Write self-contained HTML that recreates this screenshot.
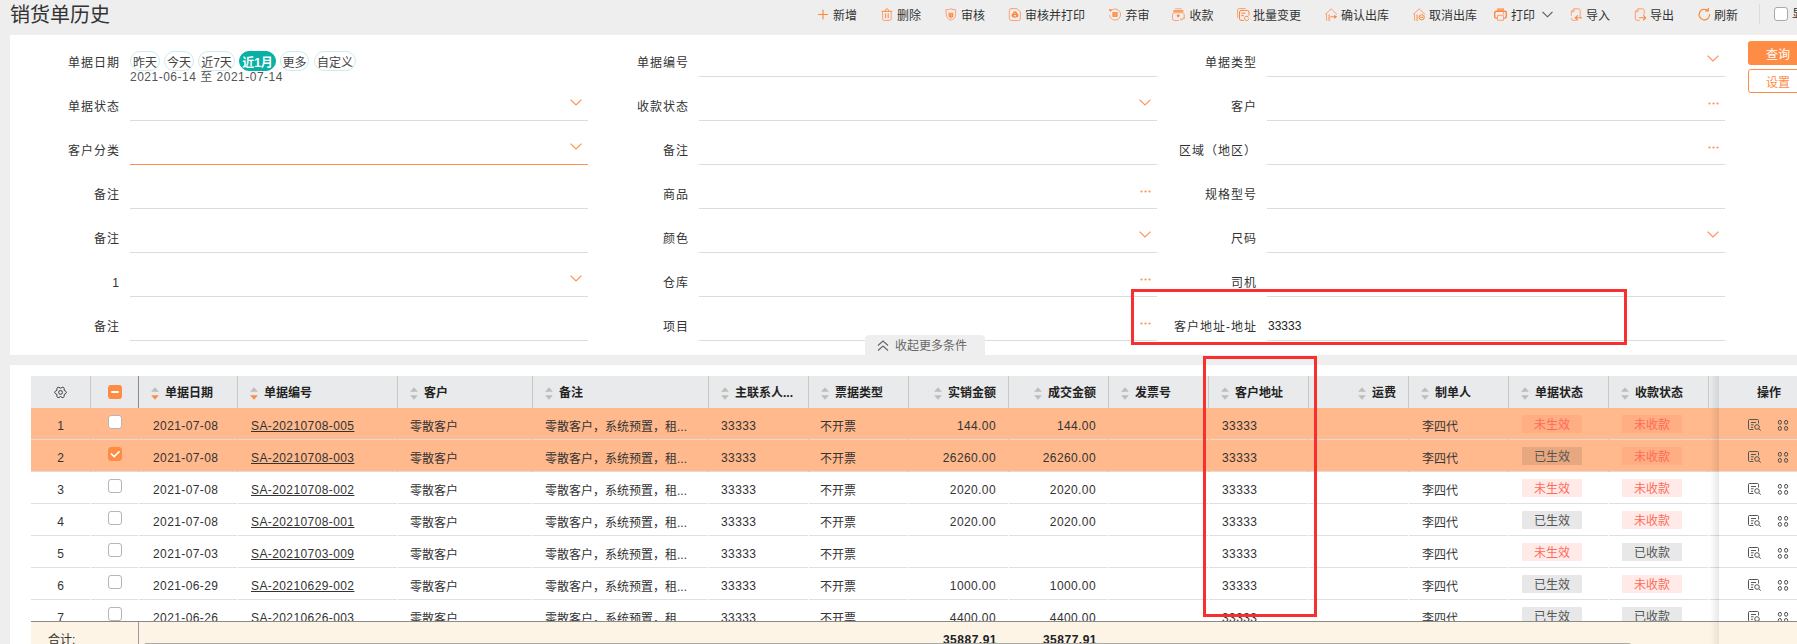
<!DOCTYPE html><html lang="zh-CN"><head><meta charset="utf-8"><title>销货单历史</title><style>
*{box-sizing:border-box;margin:0;padding:0}
html,body{width:1797px;height:644px;overflow:hidden;background:#eeeeee}
body{position:relative;font-family:"Liberation Sans","Noto Sans CJK SC",sans-serif;font-size:12px;color:#333}
.abs{position:absolute}
.title{left:10px;top:1px;height:28px;line-height:28px;font-size:20px;color:#333;white-space:nowrap}
.tb{top:0;height:33px;line-height:33px;white-space:nowrap;color:#333;font-size:12px}
.tb svg{position:absolute;left:0;top:8px;width:13px;height:13px;overflow:visible}
.tb span{position:absolute;left:15px;top:0}
.p1{left:10px;top:35px;width:1800px;height:320px;background:#fff}
.p2{left:10px;top:365px;width:1800px;height:300px;background:#fff}
.lb{height:20px;line-height:20px;width:120px;text-align:right;letter-spacing:1px;color:#333;white-space:nowrap}
.ul{height:1px;width:458px;background:#dcdcdc}
.ul.on{background:#ff9152}
.pill{top:51px;height:20px;line-height:22px;border:1px solid #c9eeec;border-radius:10px;text-align:center;color:#444;white-space:nowrap;background:#fff}
.pill.on{background:#08b0a6;border-color:#08b0a6;color:#fff;font-weight:bold}
.chev{width:12px;height:7px}
.dots{width:11px;height:3px}
.th{top:376px;height:32px;line-height:35px;font-weight:bold;color:#222;white-space:nowrap}
.sep{top:376px;width:1px;height:32px;background:#c8c8c8}
.row{left:31px;width:1800px;height:32px;border-bottom:1px solid #dfdfdf}
.row.sel{background:#ffb98c;border-bottom-color:#e2dcd8}
.c{height:32px;line-height:37px;white-space:nowrap;color:#333}
.c.r{text-align:right}
.c.n{letter-spacing:.4px}
.c.z{line-height:39px}
.lnk{text-decoration:underline}
.bd{width:60px;height:18px;line-height:20px;text-align:center;font-size:12px}
.bd.red{background:rgba(255,90,70,.13);color:#ff6a5a}
.bd.gry{background:rgba(0,0,0,.09);color:#555}
.gp{top:408px;width:1px;height:213px;background:linear-gradient(to bottom,transparent 31px,#ffb98c 31px,#ffb98c 32px,transparent 32px,transparent 63px,#ffb98c 63px,#ffb98c 64px,transparent 64px,transparent 95px,#fff 95px,#fff 96px,transparent 96px,transparent 127px,#fff 127px,#fff 128px,transparent 128px,transparent 159px,#fff 159px,#fff 160px,transparent 160px,transparent 191px,#fff 191px,#fff 192px,transparent 192px)}
.cb{width:14px;height:14px;border:1px solid #b5b5b5;border-radius:3px;background:#fff}
.cb.on{background:#ff8c45;border-color:#ff8c45}
</style></head><body>
<div class="abs title">销货单历史</div>
<div class="abs tb" style="left:818px;width:120px"><svg viewBox="0 0 13 13"><path d="M0.500 6.500h9M5 2v9" stroke="#ff8636" fill="none" stroke-width="1.1" stroke-linecap="round" stroke-linejoin="round" stroke-linecap="butt"/></svg><span style="left:15px">新增</span></div>
<div class="abs tb" style="left:881px;width:120px"><svg viewBox="0 0 13 13"><path d="M0.900 3.300h10M4.100 3.200c0-3.300 3.600-3.300 3.600 0" stroke="#ff8636" fill="none" stroke-width="1.0" stroke-linecap="round" stroke-linejoin="round" /><path d="M1.600 3.500v7a2 2 0 0 0 2 2h4.600a2 2 0 0 0 2-2v-7" stroke="#ff9f73" fill="none" stroke-width="1.0" stroke-linecap="round" stroke-linejoin="round" /><path d="M4.600 5.800v4M7.200 5.800v4" stroke="#ff8636" fill="none" stroke-width="1.0" stroke-linecap="round" stroke-linejoin="round" /></svg><span style="left:16px">删除</span></div>
<div class="abs tb" style="left:945px;width:120px"><svg viewBox="0 0 13 13"><path d="M1.200 1.800Q4 1.800 5.900 0.700Q7.800 1.800 10.600 1.800V6.500C10.600 9.600 8.500 11.300 5.900 12.300C3.300 11.300 1.200 9.600 1.200 6.500Z" stroke="#ff9f73" fill="none" stroke-width="1.0" stroke-linecap="round" stroke-linejoin="round" /><path d="M3.600 4.700h4.600v3.600c0 .6-.4 1-1 1h-2.600c-.6 0-1-.4-1-1z" fill="#ff8636"/><path d="M5.900 9.300v1" stroke="#ff8636" fill="none" stroke-width="1.0" stroke-linecap="round" stroke-linejoin="round" /><path d="M5.100 5.300v3M6.700 5.300v3" stroke="#ffd0b5" fill="none" stroke-width="0.5" stroke-linecap="round" stroke-linejoin="round" /></svg><span style="left:16px">审核</span></div>
<div class="abs tb" style="left:1009px;width:120px"><svg viewBox="0 0 13 13"><path d="M2.300 0.600h5.700l3.400 3.400v6.500a2 2 0 0 1-2 2h-7.100a2 2 0 0 1-2-2v-7.900a2 2 0 0 1 2-2z" stroke="#ff9f73" fill="none" stroke-width="1.0" stroke-linecap="round" stroke-linejoin="round" /><path d="M6 3.300a2 2 0 0 1 2 2c1 .5 1.400 1.300 1.400 2.200 0 1.300-1.500 2.300-3.400 2.300s-3.400-1-3.400-2.300c0-.9.400-1.700 1.400-2.200a2 2 0 0 1 2-2z" fill="#ff8636"/><ellipse cx="6" cy="7.700" rx="1.300" ry=".8" fill="#eeeeee"/><circle cx="6" cy="5.300" r=".6" fill="#eeeeee"/></svg><span style="left:16px">审核并打印</span></div>
<div class="abs tb" style="left:1108px;width:120px"><svg viewBox="0 0 13 13"><path d="M3.300 2.300A5.600 5.600 0 1 1 1.500 7.600" stroke="#ff9f73" fill="none" stroke-width="1.0" stroke-linecap="round" stroke-linejoin="round" /><path d="M0.900 0.700l3.400 1-2.300 2.300z" fill="#ff8636"/><path d="M4.400 4h5.200v4c0 .6-.4 1-1 1h-3.200c-.6 0-1-.4-1-1z" fill="#ff8636"/><path d="M6.100 4.600v3.800M7.900 4.600v3.800" stroke="#ffd0b5" fill="none" stroke-width="0.5" stroke-linecap="round" stroke-linejoin="round" /></svg><span style="left:17.5px">弃审</span></div>
<div class="abs tb" style="left:1172px;width:120px"><svg viewBox="0 0 13 13"><path d="M3.200 0.800h6.300" stroke="#ff9f73" fill="none" stroke-width="0.9" stroke-linecap="round" stroke-linejoin="round" /><path d="M1.800 2.900h9" stroke="#ff8636" fill="none" stroke-width="1.5" stroke-linecap="round" stroke-linejoin="round" /><path d="M2.500 4.700h7.700a2 2 0 0 1 2 2v3.600M6.500 12.500h-4a2 2 0 0 1-2-2v-3.800a2 2 0 0 1 2-2" stroke="#ff9f73" fill="none" stroke-width="1.0" stroke-linecap="round" stroke-linejoin="round" /><path d="M6.200 6l1.700 1.800-1.700 1.800-1.700-1.800z" fill="#ff8636"/><path d="M8.300 10.800l1.400 1.300 2.300-2.600" stroke="#ff8636" fill="none" stroke-width="1.0" stroke-linecap="round" stroke-linejoin="round" /></svg><span style="left:17.5px">收款</span></div>
<div class="abs tb" style="left:1237px;width:120px"><svg viewBox="0 0 13 13"><path d="M0.600 9.500v-7.300a1.700 1.700 0 0 1 1.700-1.700h5.700" stroke="#ff9f73" fill="none" stroke-width="1.0" stroke-linecap="round" stroke-linejoin="round" /><path d="M4.200 2.400h6.100a1.700 1.700 0 0 1 1.700 1.700v3M6.500 12.400h-2.300a1.700 1.700 0 0 1-1.700-1.700v-6.600a1.700 1.700 0 0 1 1.700-1.700" stroke="#ff8636" fill="none" stroke-width="1.0" stroke-linecap="round" stroke-linejoin="round" /><path d="M4.700 5.200h3.300M4.700 7.600h1.800" stroke="#ff8636" fill="none" stroke-width="1.0" stroke-linecap="round" stroke-linejoin="round" /><path d="M11.600 9.200a2.200 2.200 0 1 0 .2 1.800" stroke="#ff8636" fill="none" stroke-width="1.0" stroke-linecap="round" stroke-linejoin="round" /></svg><span style="left:16px">批量变更</span></div>
<div class="abs tb" style="left:1325px;width:120px"><svg viewBox="0 0 13 13"><path d="M0.400 6.300l5.700-5.500 5.700 5.500" stroke="#ff9f73" fill="none" stroke-width="1.0" stroke-linecap="round" stroke-linejoin="round" /><path d="M1.600 5.800v6.700" stroke="#ff9f73" fill="none" stroke-width="1.0" stroke-linecap="round" stroke-linejoin="round" /><path d="M4.100 7v5.500" stroke="#ff8636" fill="none" stroke-width="1.1" stroke-linecap="round" stroke-linejoin="round" stroke-dasharray="1.300 1" stroke-linecap="butt"/><path d="M5.800 8.800h4" stroke="#ff8636" fill="none" stroke-width="1.1" stroke-linecap="round" stroke-linejoin="round" stroke-dasharray="1.300 .8" stroke-linecap="butt"/><path d="M9.200 6.700l3 2.100-3 2.100z" fill="#ff8636"/></svg><span style="left:16px">确认出库</span></div>
<div class="abs tb" style="left:1413px;width:120px"><svg viewBox="0 0 13 13"><path d="M0.400 6.300l5.700-5.500 5.700 5.500" stroke="#ff9f73" fill="none" stroke-width="1.0" stroke-linecap="round" stroke-linejoin="round" /><path d="M1.600 5.800v6.700" stroke="#ff9f73" fill="none" stroke-width="1.0" stroke-linecap="round" stroke-linejoin="round" /><path d="M4.100 7v5.500" stroke="#ff8636" fill="none" stroke-width="1.1" stroke-linecap="round" stroke-linejoin="round" stroke-dasharray="1.300 1" stroke-linecap="butt"/><circle cx="8.700" cy="9.300" r="2.600" fill="none" stroke="#ff8636" stroke-width="1"/><path d="M7.500 9.300h2.400" stroke="#ff8636" fill="none" stroke-width="1.0" stroke-linecap="round" stroke-linejoin="round" /></svg><span style="left:16px">取消出库</span></div>
<div class="abs tb" style="left:1494px;width:120px"><svg viewBox="0 0 13 13"><path d="M3 0.300h7v2.500h-7z" fill="#ff9f73"/><path d="M2.300 3.200h8.400a1.600 1.600 0 0 1 1.600 1.600v3.700a1.600 1.600 0 0 1-1.600 1.600h-8.400a1.600 1.600 0 0 1-1.600-1.600v-3.700a1.600 1.600 0 0 1 1.600-1.600z" stroke="#ff8636" fill="none" stroke-width="1.4" stroke-linecap="round" stroke-linejoin="round" /><path d="M3.500 7.300h6v5h-6z" fill="#eeeeee" stroke="#ff9f73" stroke-width="1"/><circle cx="9.500" cy="5.200" r=".7" fill="#ff8636"/></svg><span style="left:17px">打印</span></div>
<div class="abs tb" style="left:1570px;width:120px"><svg viewBox="0 0 13 13"><path d="M1.300 7.500v-4l2.700-2.700h4.500a1.700 1.700 0 0 1 1.700 1.700v7.500M1.300 3.600h2.700v-2.700M6 12.300h-3a1.700 1.700 0 0 1-1.700-1.700" stroke="#ff9f73" fill="none" stroke-width="1.0" stroke-linecap="round" stroke-linejoin="round" /><path d="M11.600 9.800h-6M7.500 7.600l-2.300 2.200 2.300 2.200" stroke="#ff8636" fill="none" stroke-width="1.1" stroke-linecap="round" stroke-linejoin="round" /></svg><span style="left:16px">导入</span></div>
<div class="abs tb" style="left:1634px;width:120px"><svg viewBox="0 0 13 13"><path d="M1.300 9v-5.500l2.700-2.700h4.500a1.700 1.700 0 0 1 1.700 1.700v4M1.300 3.600h2.700v-2.700M1.300 9v1.600a1.700 1.700 0 0 0 1.700 1.700h2.500" stroke="#ff9f73" fill="none" stroke-width="1.0" stroke-linecap="round" stroke-linejoin="round" /><path d="M5.500 9.800h6M9.500 7.600l2.300 2.200-2.300 2.200" stroke="#ff8636" fill="none" stroke-width="1.1" stroke-linecap="round" stroke-linejoin="round" /></svg><span style="left:16px">导出</span></div>
<div class="abs tb" style="left:1698px;width:120px"><svg viewBox="0 0 13 13"><path d="M11.700 6.600a5.300 5.300 0 1 1-1.900-4.100" stroke="#ff8636" fill="none" stroke-width="1.2" stroke-linecap="round" stroke-linejoin="round" /><path d="M10.300 0.300v2.600h-2.600" stroke="#ff8636" fill="none" stroke-width="1.2" stroke-linecap="round" stroke-linejoin="round" /></svg><span style="left:16px">刷新</span></div>
<svg class="abs" style="left:1542px;top:11px" width="11" height="7" viewBox="0 0 11 7"><path d="M0.500 0.800l5 5 5-5" stroke="#555" fill="none" stroke-width="1.100"/></svg>
<div class="abs" style="left:1759px;top:4px;width:1px;height:20px;background:#dcdcdc"></div>
<div class="abs cb" style="left:1774px;top:7px;width:14px;height:14px;border-color:#a8a8a8"></div>
<div class="abs" style="left:1792px;top:0;height:29px;line-height:29px;white-space:nowrap">显示</div>
<div class="abs p1"></div>
<div class="abs lb" style="left:0px;top:53px">单据日期</div>
<div class="abs lb" style="left:569px;top:53px">单据编号</div>
<div class="abs ul" style="left:699px;top:76px"></div>
<div class="abs lb" style="left:1137px;top:53px">单据类型</div>
<div class="abs ul" style="left:1267px;top:76px"></div>
<svg class="abs chev" style="left:1707px;top:55px" viewBox="0 0 12 7"><path d="M0.500 0.600l5.500 5.400 5.500-5.400" stroke="#ff9152" fill="none" stroke-width="1.200"/></svg>
<div class="abs lb" style="left:0px;top:97px">单据状态</div>
<div class="abs ul" style="left:130px;top:120px"></div>
<svg class="abs chev" style="left:570px;top:99px" viewBox="0 0 12 7"><path d="M0.500 0.600l5.500 5.400 5.500-5.400" stroke="#ff9152" fill="none" stroke-width="1.200"/></svg>
<div class="abs lb" style="left:569px;top:97px">收款状态</div>
<div class="abs ul" style="left:699px;top:120px"></div>
<svg class="abs chev" style="left:1139px;top:99px" viewBox="0 0 12 7"><path d="M0.500 0.600l5.500 5.400 5.500-5.400" stroke="#ff9152" fill="none" stroke-width="1.200"/></svg>
<div class="abs lb" style="left:1137px;top:97px">客户</div>
<div class="abs ul" style="left:1267px;top:120px"></div>
<svg class="abs dots" style="left:1708px;top:102px" viewBox="0 0 11 3"><circle cx="1.500" cy="1.500" r="1.100" fill="#ff9152"/><circle cx="5.500" cy="1.500" r="1.100" fill="#ff9152"/><circle cx="9.500" cy="1.500" r="1.100" fill="#ff9152"/></svg>
<div class="abs lb" style="left:0px;top:141px">客户分类</div>
<div class="abs ul on" style="left:130px;top:164px"></div>
<svg class="abs chev" style="left:570px;top:143px" viewBox="0 0 12 7"><path d="M0.500 0.600l5.500 5.400 5.500-5.400" stroke="#ff9152" fill="none" stroke-width="1.200"/></svg>
<div class="abs lb" style="left:569px;top:141px">备注</div>
<div class="abs ul" style="left:699px;top:164px"></div>
<div class="abs lb" style="left:1137px;top:141px">区域（地区）</div>
<div class="abs ul" style="left:1267px;top:164px"></div>
<svg class="abs dots" style="left:1708px;top:146px" viewBox="0 0 11 3"><circle cx="1.500" cy="1.500" r="1.100" fill="#ff9152"/><circle cx="5.500" cy="1.500" r="1.100" fill="#ff9152"/><circle cx="9.500" cy="1.500" r="1.100" fill="#ff9152"/></svg>
<div class="abs lb" style="left:0px;top:185px">备注</div>
<div class="abs ul" style="left:130px;top:208px"></div>
<div class="abs lb" style="left:569px;top:185px">商品</div>
<div class="abs ul" style="left:699px;top:208px"></div>
<svg class="abs dots" style="left:1140px;top:190px" viewBox="0 0 11 3"><circle cx="1.500" cy="1.500" r="1.100" fill="#ff9152"/><circle cx="5.500" cy="1.500" r="1.100" fill="#ff9152"/><circle cx="9.500" cy="1.500" r="1.100" fill="#ff9152"/></svg>
<div class="abs lb" style="left:1137px;top:185px">规格型号</div>
<div class="abs ul" style="left:1267px;top:208px"></div>
<div class="abs lb" style="left:0px;top:229px">备注</div>
<div class="abs ul" style="left:130px;top:252px"></div>
<div class="abs lb" style="left:569px;top:229px">颜色</div>
<div class="abs ul" style="left:699px;top:252px"></div>
<svg class="abs chev" style="left:1139px;top:231px" viewBox="0 0 12 7"><path d="M0.500 0.600l5.500 5.400 5.500-5.400" stroke="#ff9152" fill="none" stroke-width="1.200"/></svg>
<div class="abs lb" style="left:1137px;top:229px">尺码</div>
<div class="abs ul" style="left:1267px;top:252px"></div>
<svg class="abs chev" style="left:1707px;top:231px" viewBox="0 0 12 7"><path d="M0.500 0.600l5.500 5.400 5.500-5.400" stroke="#ff9152" fill="none" stroke-width="1.200"/></svg>
<div class="abs lb" style="left:0px;top:273px">1</div>
<div class="abs ul" style="left:130px;top:296px"></div>
<svg class="abs chev" style="left:570px;top:275px" viewBox="0 0 12 7"><path d="M0.500 0.600l5.500 5.400 5.500-5.400" stroke="#ff9152" fill="none" stroke-width="1.200"/></svg>
<div class="abs lb" style="left:569px;top:273px">仓库</div>
<div class="abs ul" style="left:699px;top:296px"></div>
<svg class="abs dots" style="left:1140px;top:278px" viewBox="0 0 11 3"><circle cx="1.500" cy="1.500" r="1.100" fill="#ff9152"/><circle cx="5.500" cy="1.500" r="1.100" fill="#ff9152"/><circle cx="9.500" cy="1.500" r="1.100" fill="#ff9152"/></svg>
<div class="abs lb" style="left:1137px;top:273px">司机</div>
<div class="abs ul" style="left:1267px;top:296px"></div>
<div class="abs lb" style="left:0px;top:317px">备注</div>
<div class="abs ul" style="left:130px;top:340px"></div>
<div class="abs lb" style="left:569px;top:317px">项目</div>
<div class="abs ul" style="left:699px;top:340px"></div>
<svg class="abs dots" style="left:1140px;top:322px" viewBox="0 0 11 3"><circle cx="1.500" cy="1.500" r="1.100" fill="#ff9152"/><circle cx="5.500" cy="1.500" r="1.100" fill="#ff9152"/><circle cx="9.500" cy="1.500" r="1.100" fill="#ff9152"/></svg>
<div class="abs lb" style="left:1137px;top:317px">客户地址-地址</div>
<div class="abs ul" style="left:1267px;top:340px"></div>
<div class="abs pill" style="left:130px;width:30px">昨天</div>
<div class="abs pill" style="left:164px;width:30px">今天</div>
<div class="abs pill" style="left:198px;width:37px">近7天</div>
<div class="abs pill on" style="left:239px;width:37px">近1月</div>
<div class="abs pill" style="left:280px;width:29px">更多</div>
<div class="abs pill" style="left:314px;width:42px">自定义</div>
<div class="abs" style="left:130px;top:69px;height:16px;line-height:16px;color:#555;white-space:nowrap;letter-spacing:.5px">2021-06-14 至 2021-07-14</div>
<div class="abs" style="left:1268px;top:316px;height:20px;line-height:20px;color:#222">33333</div>
<div class="abs" style="left:1748px;top:41px;width:60px;height:24px;line-height:28px;background:#ff8c45;border-radius:3px;color:#fff;text-align:center">查询</div>
<div class="abs" style="left:1748px;top:69px;width:60px;height:24px;line-height:24px;padding-top:1px;background:#fff;border:1px solid #ff8c45;border-radius:3px;color:#ff8c45;text-align:center">设置</div>
<div class="abs" style="left:865px;top:335px;width:120px;height:20px;background:#eeeeee;border-radius:4px 4px 0 0"></div>
<svg class="abs" style="left:877px;top:340px" width="12" height="12" viewBox="0 0 12 12"><path d="M1 5.500l5-4.500 5 4.500M1 10.500l5-4.500 5 4.500" stroke="#666" fill="none" stroke-width="1.200"/></svg>
<div class="abs" style="left:895px;top:335px;height:20px;line-height:23px;color:#666;white-space:nowrap">收起更多条件</div>
<div class="abs p2"></div>
<div class="abs" style="left:31px;top:376px;width:1800px;height:32px;background:#e9eaec"></div>
<svg class="abs" style="left:54px;top:386px" width="13" height="13" viewBox="0 0 13 13"><path d="M10.19 4.30Q14.65 6.40 10.19 8.50Q10.60 13.41 6.55 10.60Q2.50 13.41 2.91 8.50Q-1.55 6.40 2.91 4.30Q2.50 -0.61 6.55 2.20Q10.60 -0.61 10.19 4.30z" fill="none" stroke="#3c3c3c" stroke-width="1" stroke-linejoin="round"/><circle cx="6.55" cy="6.40" r="1.900" fill="none" stroke="#3c3c3c" stroke-width="1"/></svg>
<div class="abs sep" style="left:90px;"></div>
<div class="abs" style="left:108px;top:385px;width:14px;height:14px;border-radius:3px;background:#ff8c45"></div><div class="abs" style="left:111px;top:391px;width:8px;height:2px;background:#fff;border-radius:1px"></div>
<div class="abs sep" style="left:138px;background:#8a8a8a"></div>
<svg class="abs" style="left:151px;top:387px" width="8" height="13" viewBox="0 0 8 13"><path d="M4 0.200l3.900 4.600h-7.800z" fill="#bdbdbd"/><path d="M4 12.800l3.900-4.600h-7.800z" fill="#ff8c45"/></svg>
<div class="abs th" style="left:165px">单据日期</div>
<div class="abs sep" style="left:237px;"></div>
<svg class="abs" style="left:250px;top:387px" width="8" height="13" viewBox="0 0 8 13"><path d="M4 0.200l3.900 4.600h-7.800z" fill="#bdbdbd"/><path d="M4 12.800l3.900-4.600h-7.800z" fill="#ff8c45"/></svg>
<div class="abs th" style="left:264px">单据编号</div>
<div class="abs sep" style="left:397px;"></div>
<svg class="abs" style="left:410px;top:387px" width="8" height="13" viewBox="0 0 8 13"><path d="M4 0.200l3.900 4.600h-7.800z" fill="#bdbdbd"/><path d="M4 12.800l3.900-4.600h-7.800z" fill="#bdbdbd"/></svg>
<div class="abs th" style="left:424px">客户</div>
<div class="abs sep" style="left:532px;"></div>
<svg class="abs" style="left:545px;top:387px" width="8" height="13" viewBox="0 0 8 13"><path d="M4 0.200l3.900 4.600h-7.800z" fill="#bdbdbd"/><path d="M4 12.800l3.900-4.600h-7.800z" fill="#bdbdbd"/></svg>
<div class="abs th" style="left:559px">备注</div>
<div class="abs sep" style="left:708px;"></div>
<svg class="abs" style="left:721px;top:387px" width="8" height="13" viewBox="0 0 8 13"><path d="M4 0.200l3.900 4.600h-7.800z" fill="#bdbdbd"/><path d="M4 12.800l3.900-4.600h-7.800z" fill="#bdbdbd"/></svg>
<div class="abs th" style="left:735px">主联系人...</div>
<div class="abs sep" style="left:808px;"></div>
<svg class="abs" style="left:821px;top:387px" width="8" height="13" viewBox="0 0 8 13"><path d="M4 0.200l3.900 4.600h-7.800z" fill="#bdbdbd"/><path d="M4 12.800l3.900-4.600h-7.800z" fill="#bdbdbd"/></svg>
<div class="abs th" style="left:835px">票据类型</div>
<div class="abs sep" style="left:908px;"></div>
<svg class="abs" style="left:934px;top:387px" width="8" height="13" viewBox="0 0 8 13"><path d="M4 0.200l3.900 4.600h-7.800z" fill="#bdbdbd"/><path d="M4 12.800l3.900-4.600h-7.800z" fill="#bdbdbd"/></svg>
<div class="abs th" style="left:948px">实销金额</div>
<div class="abs sep" style="left:1008px;"></div>
<svg class="abs" style="left:1034px;top:387px" width="8" height="13" viewBox="0 0 8 13"><path d="M4 0.200l3.900 4.600h-7.800z" fill="#bdbdbd"/><path d="M4 12.800l3.900-4.600h-7.800z" fill="#bdbdbd"/></svg>
<div class="abs th" style="left:1048px">成交金额</div>
<div class="abs sep" style="left:1108px;"></div>
<svg class="abs" style="left:1121px;top:387px" width="8" height="13" viewBox="0 0 8 13"><path d="M4 0.200l3.900 4.600h-7.800z" fill="#bdbdbd"/><path d="M4 12.800l3.900-4.600h-7.800z" fill="#bdbdbd"/></svg>
<div class="abs th" style="left:1135px">发票号</div>
<div class="abs sep" style="left:1208px;"></div>
<svg class="abs" style="left:1221px;top:387px" width="8" height="13" viewBox="0 0 8 13"><path d="M4 0.200l3.900 4.600h-7.800z" fill="#bdbdbd"/><path d="M4 12.800l3.900-4.600h-7.800z" fill="#bdbdbd"/></svg>
<div class="abs th" style="left:1235px">客户地址</div>
<div class="abs sep" style="left:1308px;"></div>
<svg class="abs" style="left:1358px;top:387px" width="8" height="13" viewBox="0 0 8 13"><path d="M4 0.200l3.900 4.600h-7.800z" fill="#bdbdbd"/><path d="M4 12.800l3.900-4.600h-7.800z" fill="#bdbdbd"/></svg>
<div class="abs th" style="left:1372px">运费</div>
<div class="abs sep" style="left:1408px;"></div>
<svg class="abs" style="left:1421px;top:387px" width="8" height="13" viewBox="0 0 8 13"><path d="M4 0.200l3.900 4.600h-7.800z" fill="#bdbdbd"/><path d="M4 12.800l3.900-4.600h-7.800z" fill="#bdbdbd"/></svg>
<div class="abs th" style="left:1435px">制单人</div>
<div class="abs sep" style="left:1508px;"></div>
<svg class="abs" style="left:1521px;top:387px" width="8" height="13" viewBox="0 0 8 13"><path d="M4 0.200l3.900 4.600h-7.800z" fill="#bdbdbd"/><path d="M4 12.800l3.900-4.600h-7.800z" fill="#bdbdbd"/></svg>
<div class="abs th" style="left:1535px">单据状态</div>
<div class="abs sep" style="left:1608px;"></div>
<svg class="abs" style="left:1621px;top:387px" width="8" height="13" viewBox="0 0 8 13"><path d="M4 0.200l3.900 4.600h-7.800z" fill="#bdbdbd"/><path d="M4 12.800l3.900-4.600h-7.800z" fill="#bdbdbd"/></svg>
<div class="abs th" style="left:1635px">收款状态</div>
<div class="abs sep" style="left:1708px;"></div>
<div class="abs sep" style="left:1708px"></div>
<div class="abs row sel" style="top:408px">
<div class="abs c" style="left:0;width:59px;text-align:center">1</div>
<div class="abs cb" style="left:77px;top:7px"></div>
<div class="abs c n" style="left:122px;width:90px">2021-07-08</div>
<div class="abs c n" style="left:220px;width:140px"><span class="lnk">SA-20210708-005</span></div>
<div class="abs c z" style="left:379px;width:120px">零散客户</div>
<div class="abs c z" style="left:514px;width:160px">零散客户，系统预置，租...</div>
<div class="abs c n" style="left:690px;width:80px">33333</div>
<div class="abs c z" style="left:789px;width:80px">不开票</div>
<div class="abs c r n" style="left:877px;width:88px">144.00</div>
<div class="abs c r n" style="left:977px;width:88px">144.00</div>
<div class="abs c n" style="left:1191px;width:80px">33333</div>
<div class="abs c z" style="left:1391px;width:80px">李四代</div>
<div class="abs bd red" style="left:1491px;top:7px">未生效</div>
<div class="abs bd red" style="left:1591px;top:7px">未收款</div>
</div>
<div class="abs row sel" style="top:440px">
<div class="abs c" style="left:0;width:59px;text-align:center">2</div>
<div class="abs cb on" style="left:77px;top:7px"></div><svg class="abs" style="left:77px;top:7px" width="14" height="14" viewBox="0 0 14 14"><path d="M2.800 6.500l3.300 3.100 5.400-5.300" stroke="#fff" fill="none" stroke-width="1.700"/></svg>
<div class="abs c n" style="left:122px;width:90px">2021-07-08</div>
<div class="abs c n" style="left:220px;width:140px"><span class="lnk">SA-20210708-003</span></div>
<div class="abs c z" style="left:379px;width:120px">零散客户</div>
<div class="abs c z" style="left:514px;width:160px">零散客户，系统预置，租...</div>
<div class="abs c n" style="left:690px;width:80px">33333</div>
<div class="abs c z" style="left:789px;width:80px">不开票</div>
<div class="abs c r n" style="left:877px;width:88px">26260.00</div>
<div class="abs c r n" style="left:977px;width:88px">26260.00</div>
<div class="abs c n" style="left:1191px;width:80px">33333</div>
<div class="abs c z" style="left:1391px;width:80px">李四代</div>
<div class="abs bd gry" style="left:1491px;top:7px">已生效</div>
<div class="abs bd red" style="left:1591px;top:7px">未收款</div>
</div>
<div class="abs row" style="top:472px">
<div class="abs c" style="left:0;width:59px;text-align:center">3</div>
<div class="abs cb" style="left:77px;top:7px"></div>
<div class="abs c n" style="left:122px;width:90px">2021-07-08</div>
<div class="abs c n" style="left:220px;width:140px"><span class="lnk">SA-20210708-002</span></div>
<div class="abs c z" style="left:379px;width:120px">零散客户</div>
<div class="abs c z" style="left:514px;width:160px">零散客户，系统预置，租...</div>
<div class="abs c n" style="left:690px;width:80px">33333</div>
<div class="abs c z" style="left:789px;width:80px">不开票</div>
<div class="abs c r n" style="left:877px;width:88px">2020.00</div>
<div class="abs c r n" style="left:977px;width:88px">2020.00</div>
<div class="abs c n" style="left:1191px;width:80px">33333</div>
<div class="abs c z" style="left:1391px;width:80px">李四代</div>
<div class="abs bd red" style="left:1491px;top:7px">未生效</div>
<div class="abs bd red" style="left:1591px;top:7px">未收款</div>
</div>
<div class="abs row" style="top:504px">
<div class="abs c" style="left:0;width:59px;text-align:center">4</div>
<div class="abs cb" style="left:77px;top:7px"></div>
<div class="abs c n" style="left:122px;width:90px">2021-07-08</div>
<div class="abs c n" style="left:220px;width:140px"><span class="lnk">SA-20210708-001</span></div>
<div class="abs c z" style="left:379px;width:120px">零散客户</div>
<div class="abs c z" style="left:514px;width:160px">零散客户，系统预置，租...</div>
<div class="abs c n" style="left:690px;width:80px">33333</div>
<div class="abs c z" style="left:789px;width:80px">不开票</div>
<div class="abs c r n" style="left:877px;width:88px">2020.00</div>
<div class="abs c r n" style="left:977px;width:88px">2020.00</div>
<div class="abs c n" style="left:1191px;width:80px">33333</div>
<div class="abs c z" style="left:1391px;width:80px">李四代</div>
<div class="abs bd gry" style="left:1491px;top:7px">已生效</div>
<div class="abs bd red" style="left:1591px;top:7px">未收款</div>
</div>
<div class="abs row" style="top:536px">
<div class="abs c" style="left:0;width:59px;text-align:center">5</div>
<div class="abs cb" style="left:77px;top:7px"></div>
<div class="abs c n" style="left:122px;width:90px">2021-07-03</div>
<div class="abs c n" style="left:220px;width:140px"><span class="lnk">SA-20210703-009</span></div>
<div class="abs c z" style="left:379px;width:120px">零散客户</div>
<div class="abs c z" style="left:514px;width:160px">零散客户，系统预置，租...</div>
<div class="abs c n" style="left:690px;width:80px">33333</div>
<div class="abs c z" style="left:789px;width:80px">不开票</div>
<div class="abs c r n" style="left:877px;width:88px"></div>
<div class="abs c r n" style="left:977px;width:88px"></div>
<div class="abs c n" style="left:1191px;width:80px">33333</div>
<div class="abs c z" style="left:1391px;width:80px">李四代</div>
<div class="abs bd red" style="left:1491px;top:7px">未生效</div>
<div class="abs bd gry" style="left:1591px;top:7px">已收款</div>
</div>
<div class="abs row" style="top:568px">
<div class="abs c" style="left:0;width:59px;text-align:center">6</div>
<div class="abs cb" style="left:77px;top:7px"></div>
<div class="abs c n" style="left:122px;width:90px">2021-06-29</div>
<div class="abs c n" style="left:220px;width:140px"><span class="lnk">SA-20210629-002</span></div>
<div class="abs c z" style="left:379px;width:120px">零散客户</div>
<div class="abs c z" style="left:514px;width:160px">零散客户，系统预置，租...</div>
<div class="abs c n" style="left:690px;width:80px">33333</div>
<div class="abs c z" style="left:789px;width:80px">不开票</div>
<div class="abs c r n" style="left:877px;width:88px">1000.00</div>
<div class="abs c r n" style="left:977px;width:88px">1000.00</div>
<div class="abs c n" style="left:1191px;width:80px">33333</div>
<div class="abs c z" style="left:1391px;width:80px">李四代</div>
<div class="abs bd gry" style="left:1491px;top:7px">已生效</div>
<div class="abs bd red" style="left:1591px;top:7px">未收款</div>
</div>
<div class="abs row" style="top:600px">
<div class="abs c" style="left:0;width:59px;text-align:center">7</div>
<div class="abs cb" style="left:77px;top:7px"></div>
<div class="abs c n" style="left:122px;width:90px">2021-06-26</div>
<div class="abs c n" style="left:220px;width:140px"><span class="lnk">SA-20210626-003</span></div>
<div class="abs c z" style="left:379px;width:120px">零散客户</div>
<div class="abs c z" style="left:514px;width:160px">零散客户，系统预置，租...</div>
<div class="abs c n" style="left:690px;width:80px">33333</div>
<div class="abs c z" style="left:789px;width:80px">不开票</div>
<div class="abs c r n" style="left:877px;width:88px">4400.00</div>
<div class="abs c r n" style="left:977px;width:88px">4400.00</div>
<div class="abs c n" style="left:1191px;width:80px">33333</div>
<div class="abs c z" style="left:1391px;width:80px">李四代</div>
<div class="abs bd gry" style="left:1491px;top:7px">已生效</div>
<div class="abs bd gry" style="left:1591px;top:7px">已收款</div>
</div>
<div class="abs gp" style="left:90px"></div>
<div class="abs gp" style="left:138px"></div>
<div class="abs gp" style="left:237px"></div>
<div class="abs gp" style="left:397px"></div>
<div class="abs gp" style="left:532px"></div>
<div class="abs gp" style="left:708px"></div>
<div class="abs gp" style="left:808px"></div>
<div class="abs gp" style="left:908px"></div>
<div class="abs gp" style="left:1008px"></div>
<div class="abs gp" style="left:1108px"></div>
<div class="abs gp" style="left:1208px"></div>
<div class="abs gp" style="left:1308px"></div>
<div class="abs gp" style="left:1408px"></div>
<div class="abs gp" style="left:1508px"></div>
<div class="abs gp" style="left:1608px"></div>
<div class="abs gp" style="left:1708px"></div>
<div class="abs" style="left:1710px;top:376px;width:9px;height:268px;background:linear-gradient(to right,rgba(0,0,0,0),rgba(0,0,0,.09))"></div>
<div class="abs" style="left:1719px;top:376px;width:100px;height:32px;background:#e9eaec"></div>
<div class="abs th" style="left:1757px">操作</div>
<div class="abs" style="left:1719px;top:408px;width:100px;height:32px;background:#ffb98c;border-bottom:1px solid #e4dcd8"></div>
<svg class="abs" style="left:1748px;top:419px" width="14" height="12" viewBox="0 0 14 12"><path d="M5.500 10.500h-4a1 1 0 0 1-1-1v-8a1 1 0 0 1 1-1h8a1 1 0 0 1 1 1v3M3 3.500h5M3 5.800h2.500M3 8.300h2" stroke="#555" fill="none" stroke-width="1"/><circle cx="9" cy="8" r="2.300" stroke="#555" fill="none" stroke-width="1"/><path d="M10.800 9.800l2 1.800" stroke="#555" stroke-width="1"/></svg>
<svg class="abs" style="left:1777px;top:419px" width="12" height="13" viewBox="0 0 12 13"><g stroke="#4a4a4a" fill="none" stroke-width="1"><ellipse cx="2.85" cy="3.3" rx="1.6" ry="1.9"/><ellipse cx="9.1" cy="3.3" rx="1.6" ry="1.9"/><ellipse cx="2.85" cy="9.4" rx="1.6" ry="1.9"/><ellipse cx="9.1" cy="9.4" rx="1.6" ry="1.9"/></g></svg>
<div class="abs" style="left:1719px;top:440px;width:100px;height:32px;background:#ffb98c;border-bottom:1px solid #e4dcd8"></div>
<svg class="abs" style="left:1748px;top:451px" width="14" height="12" viewBox="0 0 14 12"><path d="M5.500 10.500h-4a1 1 0 0 1-1-1v-8a1 1 0 0 1 1-1h8a1 1 0 0 1 1 1v3M3 3.500h5M3 5.800h2.500M3 8.300h2" stroke="#555" fill="none" stroke-width="1"/><circle cx="9" cy="8" r="2.300" stroke="#555" fill="none" stroke-width="1"/><path d="M10.800 9.800l2 1.800" stroke="#555" stroke-width="1"/></svg>
<svg class="abs" style="left:1777px;top:451px" width="12" height="13" viewBox="0 0 12 13"><g stroke="#4a4a4a" fill="none" stroke-width="1"><ellipse cx="2.85" cy="3.3" rx="1.6" ry="1.9"/><ellipse cx="9.1" cy="3.3" rx="1.6" ry="1.9"/><ellipse cx="2.85" cy="9.4" rx="1.6" ry="1.9"/><ellipse cx="9.1" cy="9.4" rx="1.6" ry="1.9"/></g></svg>
<div class="abs" style="left:1719px;top:472px;width:100px;height:32px;background:#fff;border-bottom:1px solid #e0e0e0"></div>
<svg class="abs" style="left:1748px;top:483px" width="14" height="12" viewBox="0 0 14 12"><path d="M5.500 10.500h-4a1 1 0 0 1-1-1v-8a1 1 0 0 1 1-1h8a1 1 0 0 1 1 1v3M3 3.500h5M3 5.800h2.500M3 8.300h2" stroke="#555" fill="none" stroke-width="1"/><circle cx="9" cy="8" r="2.300" stroke="#555" fill="none" stroke-width="1"/><path d="M10.800 9.800l2 1.800" stroke="#555" stroke-width="1"/></svg>
<svg class="abs" style="left:1777px;top:483px" width="12" height="13" viewBox="0 0 12 13"><g stroke="#4a4a4a" fill="none" stroke-width="1"><ellipse cx="2.85" cy="3.3" rx="1.6" ry="1.9"/><ellipse cx="9.1" cy="3.3" rx="1.6" ry="1.9"/><ellipse cx="2.85" cy="9.4" rx="1.6" ry="1.9"/><ellipse cx="9.1" cy="9.4" rx="1.6" ry="1.9"/></g></svg>
<div class="abs" style="left:1719px;top:504px;width:100px;height:32px;background:#fff;border-bottom:1px solid #e0e0e0"></div>
<svg class="abs" style="left:1748px;top:515px" width="14" height="12" viewBox="0 0 14 12"><path d="M5.500 10.500h-4a1 1 0 0 1-1-1v-8a1 1 0 0 1 1-1h8a1 1 0 0 1 1 1v3M3 3.500h5M3 5.800h2.500M3 8.300h2" stroke="#555" fill="none" stroke-width="1"/><circle cx="9" cy="8" r="2.300" stroke="#555" fill="none" stroke-width="1"/><path d="M10.800 9.800l2 1.800" stroke="#555" stroke-width="1"/></svg>
<svg class="abs" style="left:1777px;top:515px" width="12" height="13" viewBox="0 0 12 13"><g stroke="#4a4a4a" fill="none" stroke-width="1"><ellipse cx="2.85" cy="3.3" rx="1.6" ry="1.9"/><ellipse cx="9.1" cy="3.3" rx="1.6" ry="1.9"/><ellipse cx="2.85" cy="9.4" rx="1.6" ry="1.9"/><ellipse cx="9.1" cy="9.4" rx="1.6" ry="1.9"/></g></svg>
<div class="abs" style="left:1719px;top:536px;width:100px;height:32px;background:#fff;border-bottom:1px solid #e0e0e0"></div>
<svg class="abs" style="left:1748px;top:547px" width="14" height="12" viewBox="0 0 14 12"><path d="M5.500 10.500h-4a1 1 0 0 1-1-1v-8a1 1 0 0 1 1-1h8a1 1 0 0 1 1 1v3M3 3.500h5M3 5.800h2.500M3 8.300h2" stroke="#555" fill="none" stroke-width="1"/><circle cx="9" cy="8" r="2.300" stroke="#555" fill="none" stroke-width="1"/><path d="M10.800 9.800l2 1.800" stroke="#555" stroke-width="1"/></svg>
<svg class="abs" style="left:1777px;top:547px" width="12" height="13" viewBox="0 0 12 13"><g stroke="#4a4a4a" fill="none" stroke-width="1"><ellipse cx="2.85" cy="3.3" rx="1.6" ry="1.9"/><ellipse cx="9.1" cy="3.3" rx="1.6" ry="1.9"/><ellipse cx="2.85" cy="9.4" rx="1.6" ry="1.9"/><ellipse cx="9.1" cy="9.4" rx="1.6" ry="1.9"/></g></svg>
<div class="abs" style="left:1719px;top:568px;width:100px;height:32px;background:#fff;border-bottom:1px solid #e0e0e0"></div>
<svg class="abs" style="left:1748px;top:579px" width="14" height="12" viewBox="0 0 14 12"><path d="M5.500 10.500h-4a1 1 0 0 1-1-1v-8a1 1 0 0 1 1-1h8a1 1 0 0 1 1 1v3M3 3.500h5M3 5.800h2.500M3 8.300h2" stroke="#555" fill="none" stroke-width="1"/><circle cx="9" cy="8" r="2.300" stroke="#555" fill="none" stroke-width="1"/><path d="M10.800 9.800l2 1.800" stroke="#555" stroke-width="1"/></svg>
<svg class="abs" style="left:1777px;top:579px" width="12" height="13" viewBox="0 0 12 13"><g stroke="#4a4a4a" fill="none" stroke-width="1"><ellipse cx="2.85" cy="3.3" rx="1.6" ry="1.9"/><ellipse cx="9.1" cy="3.3" rx="1.6" ry="1.9"/><ellipse cx="2.85" cy="9.4" rx="1.6" ry="1.9"/><ellipse cx="9.1" cy="9.4" rx="1.6" ry="1.9"/></g></svg>
<div class="abs" style="left:1719px;top:600px;width:100px;height:32px;background:#fff;border-bottom:1px solid #e0e0e0"></div>
<svg class="abs" style="left:1748px;top:611px" width="14" height="12" viewBox="0 0 14 12"><path d="M5.500 10.500h-4a1 1 0 0 1-1-1v-8a1 1 0 0 1 1-1h8a1 1 0 0 1 1 1v3M3 3.500h5M3 5.800h2.500M3 8.300h2" stroke="#555" fill="none" stroke-width="1"/><circle cx="9" cy="8" r="2.300" stroke="#555" fill="none" stroke-width="1"/><path d="M10.800 9.800l2 1.800" stroke="#555" stroke-width="1"/></svg>
<svg class="abs" style="left:1777px;top:611px" width="12" height="13" viewBox="0 0 12 13"><g stroke="#4a4a4a" fill="none" stroke-width="1"><ellipse cx="2.85" cy="3.3" rx="1.6" ry="1.9"/><ellipse cx="9.1" cy="3.3" rx="1.6" ry="1.9"/><ellipse cx="2.85" cy="9.4" rx="1.6" ry="1.9"/><ellipse cx="9.1" cy="9.4" rx="1.6" ry="1.9"/></g></svg>
<div class="abs" style="left:31px;top:621px;width:1800px;height:30px;background:#fdf4e6;border-top:1px solid #8a8a8a"></div>
<div class="abs" style="left:138px;top:622px;width:1px;height:30px;background:#9a9a9a"></div>
<div class="abs" style="left:48px;top:628px;height:24px;line-height:24px;white-space:nowrap;color:#333">合计:</div>
<div class="abs" style="left:897px;top:628px;width:100px;height:24px;line-height:24px;text-align:right;font-weight:bold;letter-spacing:.5px;color:#222">35887.91</div>
<div class="abs" style="left:997px;top:628px;width:100px;height:24px;line-height:24px;text-align:right;font-weight:bold;letter-spacing:.5px;color:#222">35877.91</div>
<div class="abs" style="left:143px;top:643px;width:1489px;height:8px;background:#a9a9a9;border-radius:4px"></div>
<div class="abs" style="left:1710px;top:622px;width:9px;height:22px;background:linear-gradient(to right,rgba(0,0,0,0),rgba(0,0,0,.07))"></div>
<div class="abs" style="left:1131px;top:289px;width:496px;height:56px;border:3px solid #f92f2f"></div>
<div class="abs" style="left:1203px;top:356px;width:114px;height:261px;border:3px solid #f92f2f"></div>
</body></html>
